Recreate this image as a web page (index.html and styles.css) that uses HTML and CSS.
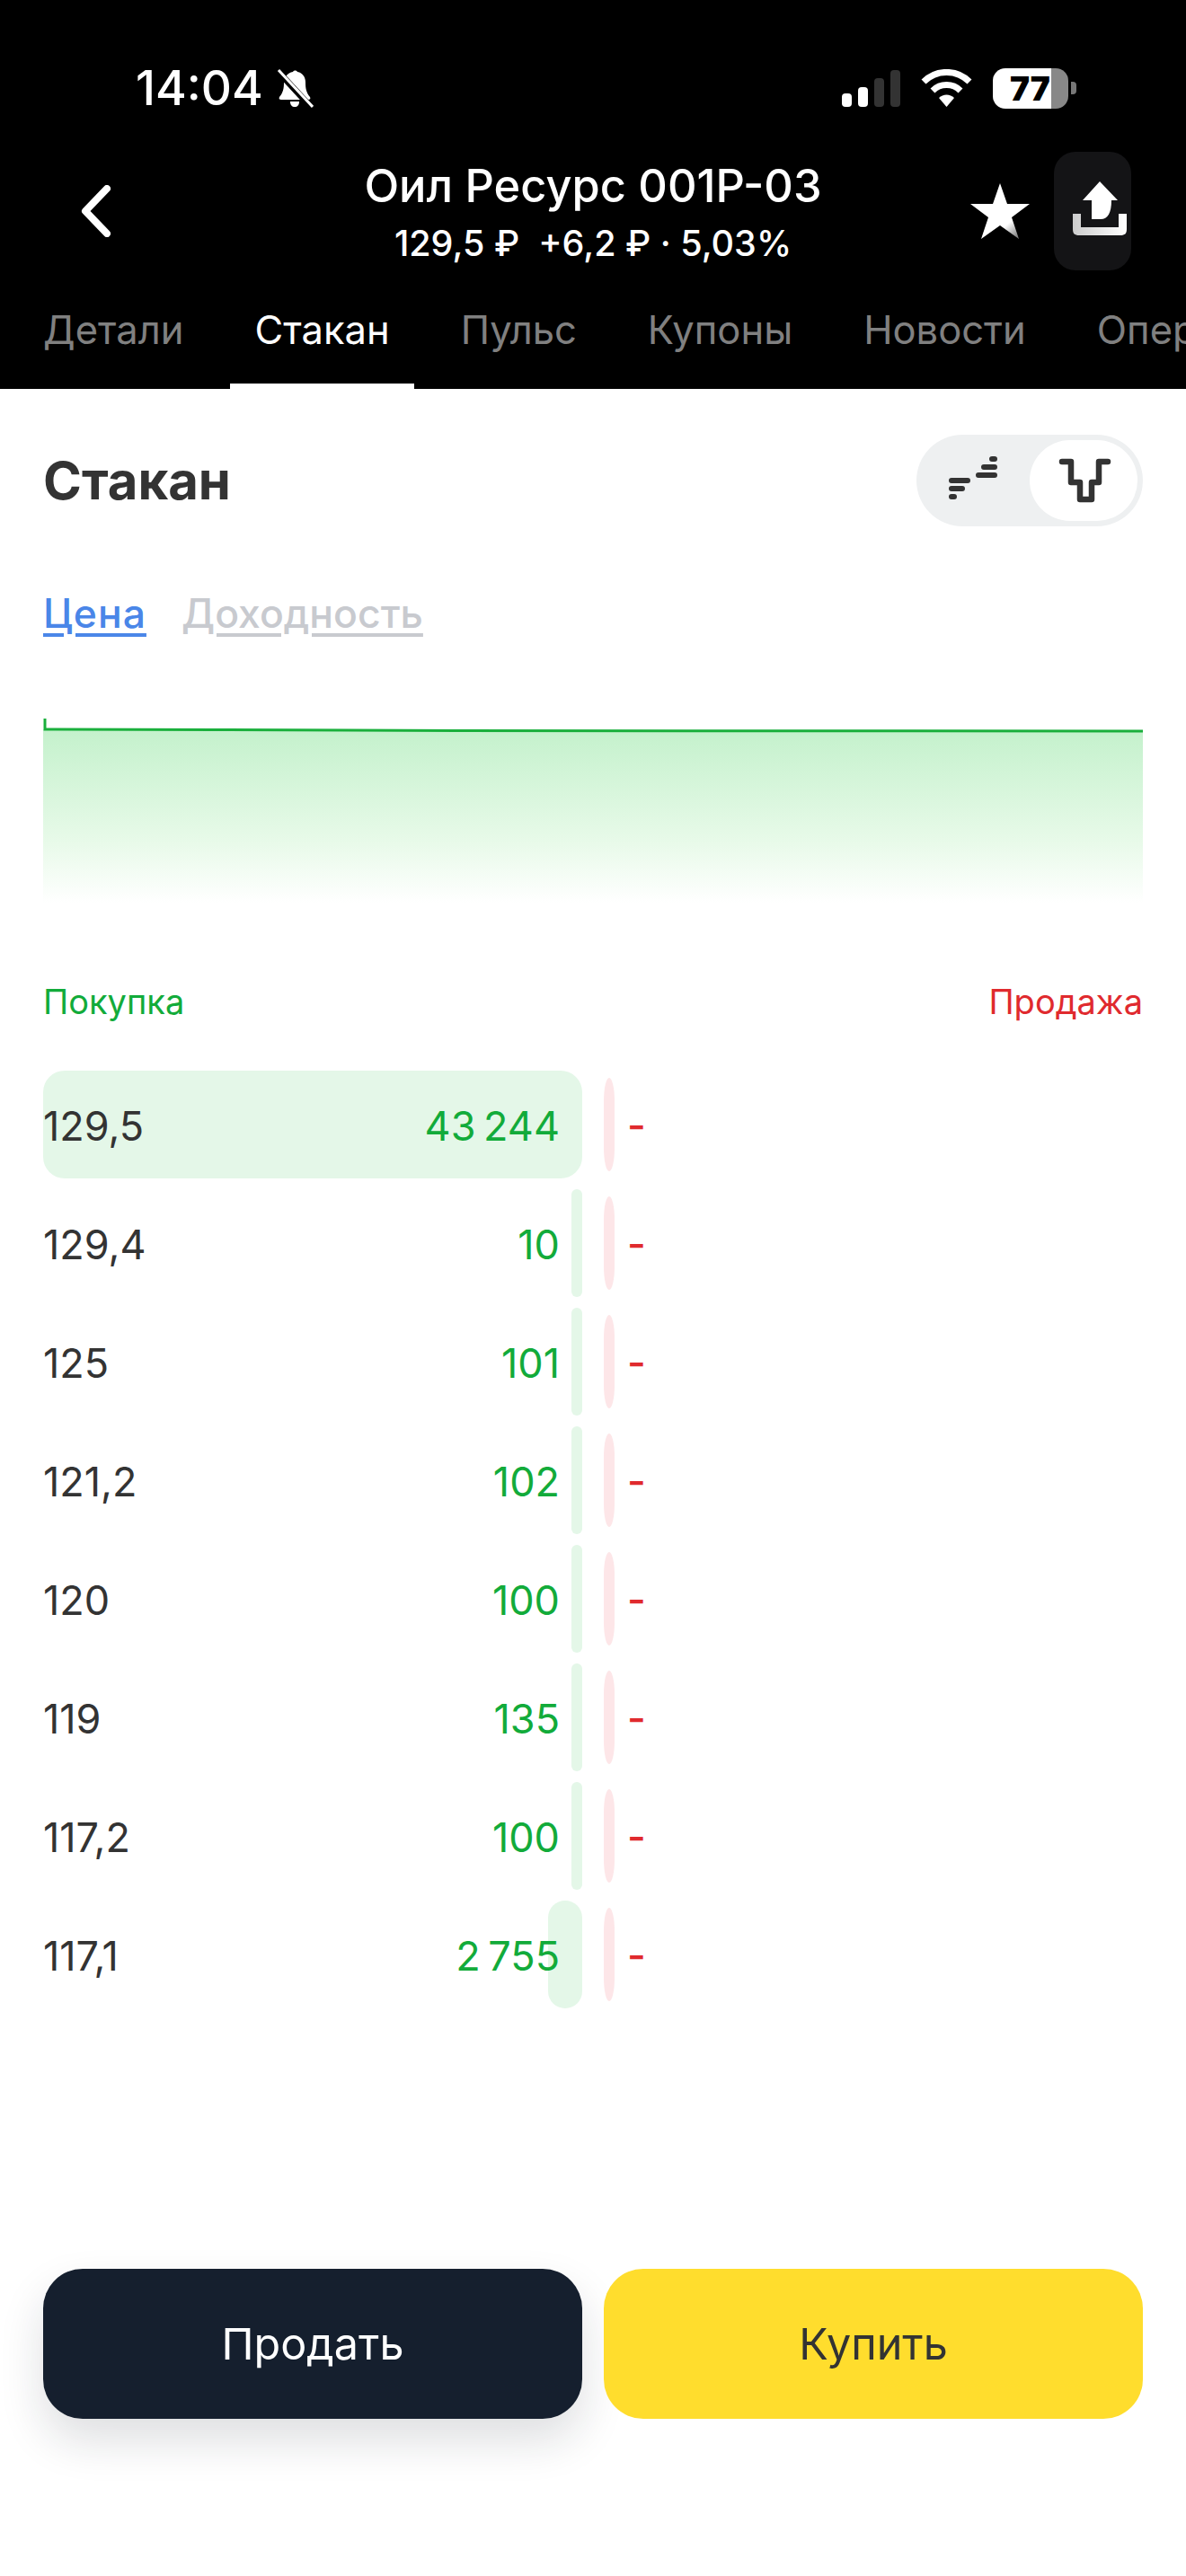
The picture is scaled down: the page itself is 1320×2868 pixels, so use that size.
FILE: index.html
```html
<!DOCTYPE html>
<html lang="ru">
<head>
    <meta charset="UTF-8">
    <meta name="viewport" content="width=device-width, initial-scale=1.0">
    <title>Стакан</title>
    <link rel="stylesheet" href="styles.css">
</head>
<body>
    <header class="top">
        <div class="status">
            <div class="status-left">
                <span class="time">14:04</span>
                <svg class="bell" width="41" height="43" viewBox="0 0 41 43">
                    <path d="M18 3c1-2 4-2 5 0 6 1 9 6 9 12 0 7 1 11 5 16 1 2 0 3-2 3H5c-2 0-3-1-2-3 4-5 5-9 5-16 0-6 4-11 10-12z" fill="#fff"/>
                    <path d="M15 36h10c0 4-2 6-5 6s-5-2-5-6z" fill="#fff"/>
                    <path d="M2 3l36 39" stroke="#000" stroke-width="7"/>
                    <path d="M2 1l38 41" stroke="#fff" stroke-width="3"/>
                </svg>
            </div>
            <div class="status-right">
                <div class="signal">
                    <span class="bar bar-1"></span>
                    <span class="bar bar-2"></span>
                    <span class="bar bar-3"></span>
                    <span class="bar bar-4"></span>
                </div>
                <svg class="wifi" width="57" height="42" viewBox="0 0 57 42">
                    <path d="M3 14a36 36 0 0 1 51 0" fill="none" stroke="#fff" stroke-width="7"/>
                    <path d="M13 24a22 22 0 0 1 31 0" fill="none" stroke="#fff" stroke-width="7"/>
                    <path d="M20 32a12 12 0 0 1 17 0L28.500 42z" fill="#fff"/>
                </svg>
                <div class="battery">
                    <div class="battery-body">77</div>
                    <div class="battery-nub"></div>
                </div>
            </div>
        </div>

        <div class="nav">
            <div class="nav-left">
                <svg width="34" height="58" viewBox="0 0 34 58">
                    <path d="M29 4L5 29l24 25" fill="none" stroke="#fff" stroke-width="8" stroke-linecap="round" stroke-linejoin="round"/>
                </svg>
            </div>
            <div class="nav-title">
                <div class="title">Оил Ресурс 001Р-03</div>
                <div class="subtitle">129,5 ₽ &nbsp;+6,2 ₽ · 5,03%</div>
            </div>
            <div class="nav-right">
                <svg width="66" height="62" viewBox="0 0 66 62">
                    <defs>
                        <linearGradient id="starFill" gradientUnits="userSpaceOnUse" x1="38" y1="42" x2="54" y2="60">
                            <stop offset="0.2" stop-color="#fff"/>
                            <stop offset="1" stop-color="#777"/>
                        </linearGradient>
                    </defs>
                    <path d="M33 0l8 23h25L46 38l8 24-21-15-21 15 8-24L0 23h25z" fill="url(#starFill)"/>
                </svg>
                <div class="share">
                    <svg width="86" height="132" viewBox="0 0 86 132">
                        <defs>
                            <linearGradient id="trayFill" x1="0" y1="0" x2="1" y2="0">
                                <stop offset="0" stop-color="#ccc"/>
                                <stop offset="1" stop-color="#fff"/>
                            </linearGradient>
                        </defs>
                        <path d="M51 33L71 54H64C64 68 60 75 52 75H42V54H32z" fill="#fff"/>
                        <path d="M21 69h9v15h42V69h9v17c0 5-2 7-7 7H28c-5 0-7-2-7-7z" fill="url(#trayFill)"/>
                    </svg>
                </div>
            </div>
        </div>

        <nav class="tabs">
            <span class="tab">Детали</span>
            <span class="tab tab-active">Стакан</span>
            <span class="tab">Пульс</span>
            <span class="tab">Купоны</span>
            <span class="tab">Новости</span>
            <span class="tab">Операции</span>
        </nav>
    </header>

    <main class="content">
        <div class="heading-row">
            <h1>Стакан</h1>
            <div class="toggle">
                <div class="toggle-item">
                    <svg width="120" height="90" viewBox="1026 490 120 90" fill="none" stroke="#333" stroke-width="6" stroke-linecap="round">
                        <path d="M1059 535h18M1059 544h12M1059 553h3M1104 511h3M1095 520h12M1089 529h18"/>
                    </svg>
                </div>
                <div class="toggle-item toggle-active">
                    <svg width="120" height="90" viewBox="1146 490 120 90" fill="none" stroke="#333" stroke-width="6.500" stroke-linecap="round" stroke-linejoin="round">
                        <path d="M1182 514h10v23h10v19h13v-19h8v-23h10"/>
                    </svg>
                </div>
            </div>
        </div>

        <div class="modes">
            <a class="mode mode-active">Цена</a>
            <a class="mode">Доходность</a>
        </div>

        <svg class="chart" width="1224" height="210" viewBox="0 0 1224 210">
            <defs>
                <linearGradient id="chartFill" x1="0" y1="0" x2="0" y2="1">
                    <stop offset="0" stop-color="#c4f1cc"/>
                    <stop offset="0.65" stop-color="#e8fae9"/>
                    <stop offset="1" stop-color="#fff"/>
                </linearGradient>
            </defs>
            <path d="M0 17H14L190 17.500 340 18 460 18.500 1224 19V210H0z" fill="url(#chartFill)"/>
            <path d="M2 5V17H14L190 17.500 340 18 460 18.500 1224 19" fill="none" stroke="#1aaf3c" stroke-width="3"/>
        </svg>

        <div class="book-head">
            <span class="buy-label">Покупка</span>
            <span class="sell-label">Продажа</span>
        </div>

        <div class="book">
            <div class="row">
                <div class="buy"><span class="depth" style="width: 600px"></span><span class="price">129,5</span><span class="qty">43 244</span></div>
                <span class="sell-bar"></span><span class="sell-qty">-</span>
            </div>
            <div class="row">
                <div class="buy"><span class="depth" style="width: 12px"></span><span class="price">129,4</span><span class="qty">10</span></div>
                <span class="sell-bar"></span><span class="sell-qty">-</span>
            </div>
            <div class="row">
                <div class="buy"><span class="depth" style="width: 12px"></span><span class="price">125</span><span class="qty">101</span></div>
                <span class="sell-bar"></span><span class="sell-qty">-</span>
            </div>
            <div class="row">
                <div class="buy"><span class="depth" style="width: 12px"></span><span class="price">121,2</span><span class="qty">102</span></div>
                <span class="sell-bar"></span><span class="sell-qty">-</span>
            </div>
            <div class="row">
                <div class="buy"><span class="depth" style="width: 12px"></span><span class="price">120</span><span class="qty">100</span></div>
                <span class="sell-bar"></span><span class="sell-qty">-</span>
            </div>
            <div class="row">
                <div class="buy"><span class="depth" style="width: 12px"></span><span class="price">119</span><span class="qty">135</span></div>
                <span class="sell-bar"></span><span class="sell-qty">-</span>
            </div>
            <div class="row">
                <div class="buy"><span class="depth" style="width: 12px"></span><span class="price">117,2</span><span class="qty">100</span></div>
                <span class="sell-bar"></span><span class="sell-qty">-</span>
            </div>
            <div class="row">
                <div class="buy"><span class="depth" style="width: 38px"></span><span class="price">117,1</span><span class="qty">2 755</span></div>
                <span class="sell-bar"></span><span class="sell-qty">-</span>
            </div>
        </div>

        <div class="actions">
            <button class="btn btn-sell">Продать</button>
            <button class="btn btn-buy">Купить</button>
        </div>
    </main>
</body>
</html>
```

FILE: styles.css
```css
/* Page */
html, body {
    margin: 0;
    padding: 0;
}
body {
    width: 1320px;
    height: 2868px;
    overflow: hidden;
    background-color: #fff;
    color: #333;
    font-family: Inter, Roboto, sans-serif;
}

/* Black header */
.top {
    background-color: #000;
    color: #fff;
    height: 433px;
}
.status {
    display: flex;
    justify-content: space-between;
    align-items: center;
    height: 56px;
    padding: 70px 122px 43px 151px;
}
.status-left {
    display: flex;
    align-items: center;
    gap: 15px;
}
.time {
    font-size: 53px;
    font-weight: 500;
    line-height: 56px;
}
.status-right {
    display: flex;
    align-items: center;
    gap: 23px;
}
.signal {
    display: flex;
    align-items: flex-end;
    gap: 7px;
    height: 41px;
}
.bar {
    width: 11px;
    border-radius: 4px;
    background-color: #fff;
}
.bar-1 { height: 15px; }
.bar-2 { height: 22px; }
.bar-3 { height: 32px; background-color: #333; }
.bar-4 { height: 41px; background-color: #333; }
.battery {
    display: flex;
    align-items: center;
    gap: 3px;
}
.battery-body {
    width: 65px;
    height: 45px;
    padding-left: 19px;
    border-radius: 14px;
    background: linear-gradient(90deg, #fff 77%, #888 77%);
    color: #000;
    font-size: 37px;
    font-weight: 900;
    line-height: 45px;
}
.battery-nub {
    width: 6px;
    height: 14px;
    border-radius: 0 4px 4px 0;
    background-color: #777;
}

.nav {
    display: grid;
    grid-template-columns: 240px 1fr 240px;
    align-items: center;
    height: 132px;
}
.nav-left {
    display: flex;
    padding-left: 90px;
}
.nav-title {
    padding-top: 2px;
    text-align: center;
}
.title {
    font-size: 50.500px;
    font-weight: 500;
    line-height: 60px;
}
.subtitle {
    margin-top: 9px;
    font-size: 39.500px;
    font-weight: 500;
    line-height: 50px;
}
.nav-right {
    display: flex;
    align-items: center;
    justify-content: flex-end;
    gap: 27px;
    padding-right: 61px;
}
.share {
    display: flex;
    width: 86px;
    height: 132px;
    border-radius: 24px;
    background-color: #141416;
}

.tabs {
    display: flex;
    gap: 25px;
    height: 132px;
    padding-left: 21px;
    overflow: hidden;
}
.tab {
    flex: none;
    box-sizing: border-box;
    height: 132px;
    padding: 40px 27px 34px;
    border-bottom: 6px solid transparent;
    color: #808080;
    font-size: 43.500px;
    line-height: 52px;
}
.tab-active {
    color: #fff;
    border-bottom-color: #fff;
}

/* Content */
.content {
    padding: 51px 48px 0;
}
.heading-row {
    display: flex;
    justify-content: space-between;
    align-items: center;
    height: 102px;
}
h1 {
    margin: 0;
    font-size: 58px;
    font-weight: 700;
    line-height: 70px;
    color: #333;
}
.toggle {
    display: flex;
    box-sizing: border-box;
    width: 252px;
    height: 102px;
    padding: 6px;
    border-radius: 51px;
    background-color: #eef0f1;
}
.toggle-item {
    display: flex;
    width: 120px;
    height: 90px;
    border-radius: 45px;
}
.toggle-active {
    background-color: #fff;
}

.modes {
    display: flex;
    gap: 39px;
    margin-top: 72px;
    font-size: 44.500px;
    font-weight: 500;
    line-height: 50px;
}
.mode {
    color: #c8cacf;
    text-decoration: underline;
    text-underline-offset: 6px;
    text-decoration-thickness: 4px;
}
.mode-active {
    color: #4a86e8;
    letter-spacing: 1px;
}

.chart {
    display: block;
    margin-top: 87px;
}

.book-head {
    display: flex;
    justify-content: space-between;
    margin-top: 88px;
    font-size: 38px;
    line-height: 44px;
}
.buy-label {
    color: #12ab3a;
}
.sell-label {
    color: #e02a2e;
}

/* Order book */
.book {
    display: flex;
    flex-direction: column;
    gap: 12px;
    margin-top: 55px;
}
.row {
    display: flex;
    align-items: center;
    height: 120px;
}
.buy {
    position: relative;
    display: flex;
    justify-content: space-between;
    align-items: center;
    width: 600px;
    height: 120px;
    padding: 3px 25px 0 0;
    box-sizing: border-box;
    font-size: 45px;
    word-spacing: -4px;
}
.depth {
    position: absolute;
    top: 0;
    right: 0;
    bottom: 0;
    border-radius: 24px;
    background-color: #e4f7e8;
}
.price, .qty {
    position: relative;
}
.qty {
    color: #12ab3a;
}
.sell-bar {
    width: 12px;
    height: 104px;
    margin-left: 24px;
    border-radius: 6px / 26px;
    background-color: #fde6e8;
}
.sell-qty {
    margin-left: 14px;
    color: #e02a2e;
    font-size: 45px;
    font-weight: 500;
}

/* Buttons */
.actions {
    display: flex;
    gap: 24px;
    margin-top: 290px;
}
.btn {
    width: 600px;
    height: 167px;
    border: none;
    border-radius: 44px;
    font-family: inherit;
    font-size: 48.500px;
}
.btn-sell {
    background-color: #151f2e;
    color: #fff;
    box-shadow: 0 24px 50px rgba(21, 31, 46, 0.14);
}
.btn-buy {
    background-color: #ffdd2d;
    color: #333;
}
```
